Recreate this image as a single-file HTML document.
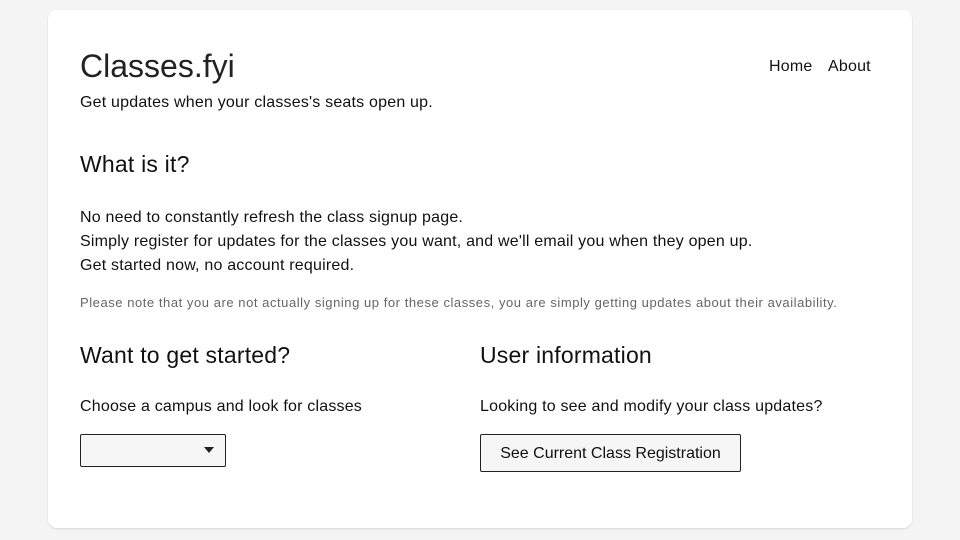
<!DOCTYPE html>
<html><head><meta charset="utf-8"><style>
body{margin:0;width:960px;height:540px;background:#f4f4f4;font-family:"Liberation Sans",sans-serif;color:#111;position:relative;overflow:hidden}
.card{position:absolute;left:48px;top:10px;width:864px;height:518px;background:#fff;border-radius:9px;box-shadow:0 1px 2px rgba(0,0,0,.12)}
.t{position:absolute;white-space:nowrap;letter-spacing:0.2px}
.sel{position:absolute;left:80px;top:434px;width:144px;height:31px;border:1px solid #222;border-radius:2px;background:#f6f6f6}
.sel:after{content:"";position:absolute;right:11px;top:12px;border-left:5px solid transparent;border-right:5px solid transparent;border-top:6px solid #222}
.btn{position:absolute;left:480px;top:434px;width:259px;height:36px;border:1px solid #222;border-radius:2px;background:#f6f6f6;font-size:16px;line-height:37px;text-align:center;color:#111}
</style></head><body>
<div class="card"></div>
<div class="t" style="left:80px;top:48px;font-size:32px;letter-spacing:0;color:#222">Classes.fyi</div>
<div class="t" style="left:769px;top:58px;font-size:16px">Home</div>
<div class="t" style="left:828px;top:58px;font-size:16px">About</div>
<div class="t" style="left:80px;top:94px;font-size:16px">Get updates when your classes's seats open up.</div>
<div class="t" style="left:80px;top:151px;font-size:23px">What is it?</div>
<div class="t" style="left:80px;top:206px;font-size:16px;line-height:24px">No need to constantly refresh the class signup page.<br>Simply register for updates for the classes you want, and we'll email you when they open up.<br>Get started now, no account required.</div>
<div class="t" style="left:80px;top:295px;font-size:13px;letter-spacing:0.55px;color:#666">Please note that you are not actually signing up for these classes, you are simply getting updates about their availability.</div>
<div class="t" style="left:80px;top:342px;font-size:23px">Want to get started?</div>
<div class="t" style="left:480px;top:342px;font-size:23px">User information</div>
<div class="t" style="left:80px;top:398px;font-size:16px">Choose a campus and look for classes</div>
<div class="t" style="left:480px;top:398px;font-size:16px">Looking to see and modify your class updates?</div>
<div class="sel"></div>
<div class="btn">See Current Class Registration</div>
</body></html>
